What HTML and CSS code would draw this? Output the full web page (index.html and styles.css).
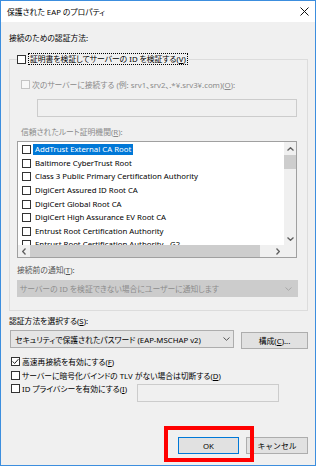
FILE: index.html
```html
<!DOCTYPE html>
<html lang="ja">
    <head>
        <meta charset="utf-8">
        <title>保護された EAP のプロパティ</title>
        <link rel="stylesheet" href="styles.css">
    </head>
    <body>
        <div class="window">
            <header class="titlebar">
                <span class="title">保護された EAP のプロパティ</span>
                <svg class="close" width="9" height="9" viewBox="0 0 9 9">
                    <path d="M0.5 0.5 L8.5 8.5 M8.5 0.5 L0.5 8.5" stroke="#111" stroke-width="1" fill="none"/>
                </svg>
            </header>

            <main class="content">
                <p class="label">接続のための認証方法:</p>

                <fieldset class="group">
                    <legend class="group-head">
                        <span class="check"></span>
                        <span class="focus">証明書を検証してサーバーの ID を検証する(<u>V</u>)</span>
                    </legend>

                    <div class="row indent muted">
                        <span class="check off"></span>
                        <span class="text">次のサーバーに接続する (例: srv1、srv2、.*¥.srv3¥.com)(<u>O</u>):</span>
                    </div>
                    <div class="server-box"></div>

                    <p class="sub-label muted">信頼されたルート証明機関(<u>R</u>):</p>

                    <div class="certs">
                        <div class="certs-body">
                            <ul class="cert-list">
                                <li><span class="check"></span><span class="name selected">AddTrust External CA Root</span></li>
                                <li><span class="check"></span><span class="name">Baltimore CyberTrust Root</span></li>
                                <li><span class="check"></span><span class="name">Class 3 Public Primary Certification Authority</span></li>
                                <li><span class="check"></span><span class="name">DigiCert Assured ID Root CA</span></li>
                                <li><span class="check"></span><span class="name">DigiCert Global Root CA</span></li>
                                <li><span class="check"></span><span class="name">DigiCert High Assurance EV Root CA</span></li>
                                <li><span class="check"></span><span class="name">Entrust Root Certification Authority</span></li>
                                <li><span class="check"></span><span class="name">Entrust Root Certification Authority - G2</span></li>
                            </ul>
                            <div class="vscroll">
                                <span class="arrow">
                                    <svg width="7" height="4" viewBox="0 0 7 4"><path d="M0.5 3.5 L3.5 0.7 L6.5 3.5" fill="none" stroke="#606060" stroke-width="1.3"/></svg>
                                </span>
                                <span class="thumb"></span>
                                <span class="track"></span>
                                <span class="arrow">
                                    <svg width="7" height="4" viewBox="0 0 7 4"><path d="M0.5 0.5 L3.5 3.3 L6.5 0.5" fill="none" stroke="#606060" stroke-width="1.3"/></svg>
                                </span>
                            </div>
                        </div>
                        <div class="hscroll">
                            <span class="arrow">
                                <svg width="4" height="7" viewBox="0 0 4 7"><path d="M3.5 0.5 L0.7 3.5 L3.5 6.5" fill="none" stroke="#606060" stroke-width="1.3"/></svg>
                            </span>
                            <span class="thumb"></span>
                            <span class="track"></span>
                            <span class="arrow">
                                <svg width="4" height="7" viewBox="0 0 4 7"><path d="M0.5 0.5 L3.3 3.5 L0.5 6.5" fill="none" stroke="#606060" stroke-width="1.3"/></svg>
                            </span>
                            <span class="corner"></span>
                        </div>
                    </div>

                    <p class="notify-label">接続前の通知(<u>T</u>):</p>
                    <div class="select disabled">
                        <span>サーバーの ID を検証できない場合にユーザーに通知します</span>
                        <svg width="7" height="4" viewBox="0 0 7 4"><path d="M0.5 0.5 L3.5 3.3 L6.5 0.5" fill="none" stroke="#a8a8a8" stroke-width="1"/></svg>
                    </div>
                </fieldset>

                <p class="method-label">認証方法を選択する(<u>S</u>):</p>
                <div class="method-row">
                    <div class="select method">
                        <span>セキュリティで保護されたパスワード (EAP-MSCHAP v2)</span>
                        <svg width="7" height="4" viewBox="0 0 7 4"><path d="M0.5 0.5 L3.5 3.3 L6.5 0.5" fill="none" stroke="#555" stroke-width="1"/></svg>
                    </div>
                    <button type="button" class="btn config">構成(<u>C</u>)...</button>
                </div>

                <div class="options">
                    <div class="opt">
                        <span class="check">
                            <svg width="7" height="7" viewBox="0 0 7 7"><path d="M0.6 3.4 L2.6 5.5 L6.4 1.2" fill="none" stroke="#222" stroke-width="1"/></svg>
                        </span>
                        <span class="text">高速再接続を有効にする(<u>F</u>)</span>
                    </div>
                    <div class="opt">
                        <span class="check"></span>
                        <span class="text">サーバーに暗号化バインドの TLV がない場合は切断する(<u>D</u>)</span>
                    </div>
                    <div class="opt privacy">
                        <span class="privacy-label">
                            <span class="check"></span>
                            <span class="text">ID プライバシーを有効にする(<u>I</u>)</span>
                        </span>
                        <span class="privacy-box"></span>
                    </div>
                </div>

                <div class="actions">
                    <button type="button" class="btn default">OK</button>
                    <button type="button" class="btn">キャンセル</button>
                </div>
            </main>

            <div class="marker"></div>
        </div>
    </body>
</html>
```

FILE: styles.css
```css
*
{
    box-sizing: border-box;
}

body
{
    margin: 0;
    background-color: #ffffff;
    font-family: "Noto Sans", "Noto Sans CJK JP", sans-serif;
    font-size: 7.8px;
    font-feature-settings: "palt";
    color: #000000;
}

p
{
    margin: 0;
}

u
{
    text-decoration-thickness: 1px;
    text-underline-offset: 1px;
}

.window
{
    position: relative;
    width: 316px;
    height: 466px;
    border: 1px solid #3c8ede;
    background-color: #f0f0f0;
    display: flex;
    flex-direction: column;
}

.titlebar
{
    height: 21px;
    background-color: #ffffff;
    display: flex;
    align-items: center;
    justify-content: space-between;
    padding: 0 6px 0 6px;
}

.title
{
    line-height: 12px;
}

.content
{
    flex: 1;
    display: flex;
    flex-direction: column;
    padding: 0 7px 11px 8px;
}

.label
{
    margin-top: 10px;
    line-height: 12px;
}

/* check boxes */
.check
{
    flex: none;
    width: 9px;
    height: 9px;
    border: 1px solid #333333;
    background-color: #ffffff;
    display: inline-flex;
    align-items: center;
    justify-content: center;
}

.check.off
{
    border-color: #c4c4c4;
    background-color: #f7f7f7;
}

.muted
{
    color: #8a8a8a;
}

/* group box */
.group
{
    margin: 9px 0 0 0;
    padding: 0 10px 13px 7px;
    border: 1px solid #dcdcdc;
    min-width: 0;
}

.group-head
{
    padding: 0;
    height: 12px;
    display: flex;
    align-items: center;
}

.focus
{
    margin-left: 2px;
    padding: 0 1px;
    line-height: 10px;
    border: 1px dotted #000000;
}

.row
{
    display: flex;
    align-items: center;
    height: 12px;
}

.indent
{
    margin-top: 13px;
    padding-left: 4px;
}

.row .text
{
    margin-left: 2px;
}

.server-box
{
    margin: 9px 0 0 20px;
    width: 260px;
    height: 18px;
    border: 1px solid #cccccc;
    background-color: #f0f0f0;
}

.sub-label
{
    margin: 9px 0 0 4px;
    line-height: 12px;
}

/* certificate list */
.certs
{
    margin-top: 3px;
    width: 280px;
    height: 117px;
    border: 1px solid #a0a0a0;
    background-color: #ffffff;
    display: flex;
    flex-direction: column;
}

.certs-body
{
    flex: 1;
    display: flex;
    min-height: 0;
}

.cert-list
{
    flex: 1;
    margin: 0;
    padding: 1px 0 0 4px;
    list-style: none;
    overflow: hidden;
}

.cert-list li
{
    height: 13.6px;
    display: flex;
    align-items: center;
    white-space: nowrap;
}

.name
{
    margin-left: 2px;
    padding: 0 2px;
    line-height: 11px;
}

.name.selected
{
    background-color: #0078d7;
    color: #ffffff;
}

.vscroll
{
    width: 12px;
    display: flex;
    flex-direction: column;
    background-color: #f0f0f0;
}

.vscroll .arrow
{
    height: 13px;
    display: flex;
    align-items: center;
    justify-content: center;
}

.vscroll .thumb
{
    height: 14px;
    background-color: #cdcdcd;
}

.track
{
    flex: 1;
}

.hscroll
{
    height: 12px;
    display: flex;
    background-color: #f0f0f0;
}

.hscroll .arrow
{
    width: 12px;
    display: flex;
    align-items: center;
    justify-content: center;
}

.hscroll .thumb
{
    width: 230px;
    background-color: #cdcdcd;
}

.hscroll .corner
{
    width: 12px;
    background-color: #f0f0f0;
}

/* drop downs */
.notify-label
{
    margin-top: 6px;
    line-height: 12px;
    color: #555555;
}

.select
{
    display: flex;
    align-items: center;
    justify-content: space-between;
    white-space: nowrap;
}

.select.disabled
{
    margin-top: 4px;
    width: 281px;
    height: 17px;
    padding: 0 5px 0 2px;
    border: 1px solid #cccccc;
    background-color: #cccccc;
    color: #8c8c8c;
}

.method-label
{
    margin-top: 4px;
    line-height: 12px;
}

.method-row
{
    margin-top: 3px;
    display: flex;
    align-items: flex-start;
    gap: 7px;
}

.select.method
{
    margin-left: 1px;
    width: 224px;
    height: 18px;
    padding: 0 3px 0 4px;
    border: 1px solid #adadad;
    background-color: #e5e5e5;
}

.btn
{
    height: 17px;
    padding: 0;
    border: 1px solid #adadad;
    background-color: #e1e1e1;
    font-family: inherit;
    font-size: 7.8px;
    color: #000000;
}

.config
{
    margin-top: 2px;
    width: 67px;
}

/* options */
.options
{
    margin-top: 6px;
}

.opt
{
    margin-left: 2px;
    height: 13.5px;
    display: flex;
    align-items: center;
}

.opt .text
{
    margin-left: 2px;
}

.privacy
{
    height: auto;
    align-items: flex-start;
}

.privacy-label
{
    width: 126px;
    height: 13.5px;
    display: flex;
    align-items: center;
}

.privacy-box
{
    margin-top: 2px;
    width: 142px;
    height: 18px;
    border: 1px solid #cccccc;
    background-color: #f0f0f0;
}

.actions
{
    margin-top: auto;
    display: flex;
    justify-content: flex-end;
    gap: 7px;
}

.actions .btn
{
    width: 62px;
}

.actions .default
{
    width: 61px;
    border-color: #0078d7;
}

/* red annotation frame */
.marker
{
    position: absolute;
    left: 163px;
    top: 425px;
    width: 90px;
    height: 36px;
    border: 4px solid #ff0000;
}
```
